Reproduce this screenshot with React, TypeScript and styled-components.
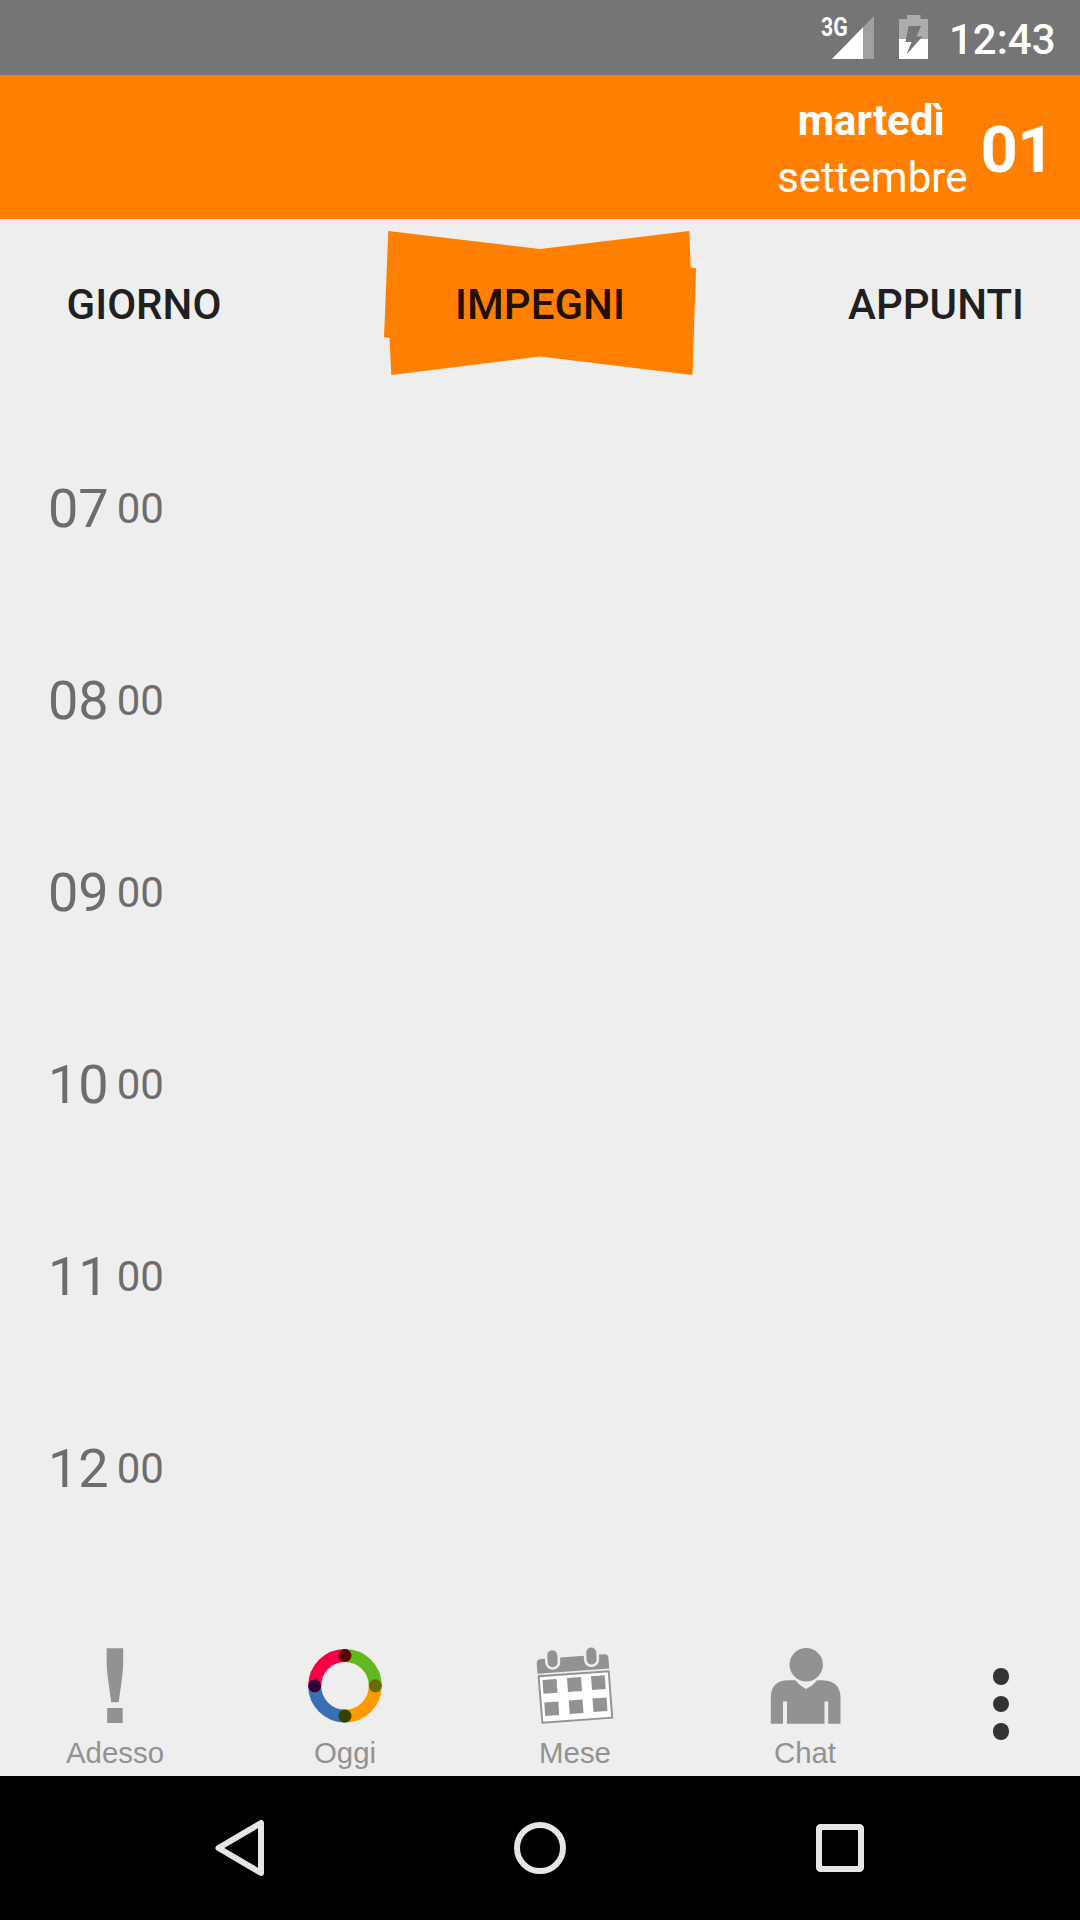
import React from "react";
import styled, { createGlobalStyle } from "styled-components";

const GlobalStyle = createGlobalStyle`
  body { margin: 0; background: #eeeeee; }
  * { box-sizing: border-box; }
`;

const Screen = styled.div`
  width: 1080px;
  height: 1920px;
  display: flex;
  flex-direction: column;
  overflow: hidden;
  background: #eeeeee;
  font-family: Roboto, sans-serif;
`;

const StatusBar = styled.div`
  height: 75px;
  flex: none;
  display: flex;
  justify-content: flex-end;
  background: #757575;
  color: #fff;
`;

const Network = styled.span`
  width: 11px;
  margin-top: 15px;
  font-size: 25px;
  line-height: 26px;
  font-weight: 700;
  transform: scaleX(0.85);
  transform-origin: 0 0;
`;

const SignalIcon = styled.svg`
  width: 42px;
  height: 43px;
  margin: 16px 25px 0 0;
`;

const BatteryIcon = styled.svg`
  width: 29px;
  height: 44px;
  margin: 15px 21px 0 0;
`;

const Clock = styled.span`
  width: 131px;
  font-size: 42px;
  line-height: 80px;
  font-weight: 500;
`;

const DateHeader = styled.header`
  height: 144px;
  flex: none;
  display: flex;
  justify-content: flex-end;
  align-items: center;
  padding: 4px 26px 0 0;
  gap: 13px;
  background: #ff8000;
  color: #fff;
`;

const DateNames = styled.div`
  display: flex;
  flex-direction: column;
  align-items: center;
`;

const DateLine = styled.span<{ $bold?: boolean }>`
  font-size: 42px;
  line-height: 57px;
  font-weight: ${(p) => (p.$bold ? 700 : 400)};
  padding-right: ${(p) => (p.$bold ? 2 : 0)}px;
`;

const DayNumber = styled.span`
  font-size: 65px;
  line-height: 72px;
  font-weight: 700;
  padding-top: 2px;
  letter-spacing: -0.5px;
`;

const Tabs = styled.nav`
  height: 168px;
  flex: none;
  display: grid;
  grid-template-columns: 288px 312px 288px;
  justify-content: space-between;
  padding: 12px 0;
`;

const Tab = styled.div`
  display: grid;
  place-items: center;
  font-size: 42px;
  line-height: 50px;
  font-weight: 500;

  > * { grid-area: 1 / 1; }
`;

const ActiveShape = styled.svg`
  width: 312px;
  height: 144px;
`;

const TabLabel = styled.span<{ $active?: boolean }>`
  z-index: 1;
  padding-top: 4px;
  letter-spacing: 0.05px;
  color: ${(p) => (p.$active ? "#220f00" : "#202020")};
`;

const Hours = styled.main`
  flex: 1;
  min-height: 0;
  padding-top: 26px;
  overflow: hidden;
`;

const HourRow = styled.div`
  height: 192px;
  display: flex;
  align-items: center;
  padding-left: 48px;
  gap: 8px;
  color: #6d6d6d;
`;

const Hour = styled.span`
  font-size: 54px;
  line-height: 64px;
`;

const Minutes = styled.span`
  font-size: 42px;
  line-height: 50px;
`;

const BottomBar = styled.footer`
  height: 144px;
  flex: none;
  display: grid;
  grid-template-columns: repeat(4, 230px) 1fr;
`;

const BottomItem = styled.div`
  display: flex;
  flex-direction: column;
  align-items: center;
  padding-top: 12px;
  color: #929292;
`;

const ItemIcon = styled.svg`
  width: 80px;
  height: 84px;
  flex: none;
`;

const ItemLabel = styled.span`
  font-family: "Liberation Sans", Arial, sans-serif;
  font-size: 29.4px;
  line-height: 34px;
  margin-top: 8px;
`;

const Overflow = styled.div`
  display: flex;
  flex-direction: column;
  align-items: center;
  gap: 11px;
  padding: 36px 0 0 2px;
`;

const Dot = styled.i`
  width: 16.7px;
  height: 16.7px;
  border-radius: 50%;
  background: #333;
`;

const SystemNav = styled.div`
  height: 144px;
  flex: none;
  display: flex;
  justify-content: center;
  align-items: center;
  gap: 240px;
  background: #000;
`;

const NavIcon = styled.svg`
  width: 60px;
  height: 60px;
  fill: none;
  stroke: #e6e6e6;
  stroke-width: 6;
  stroke-linejoin: round;
`;

const hours = ["07", "08", "09", "10", "11", "12"];

const AlertIcon = () => (
  <ItemIcon viewBox="75 1644 80 84" fill="#929292">
    <path d="M106.700 1648.300H123.200V1662Q123.200 1669 122.300 1676L118.700 1702.300H111.200L107.600 1676Q106.700 1669 106.700 1662Z" />
    <path d="M107.200 1708H122.700V1723H107.200Z" />
  </ItemIcon>
);

const RingIcon = () => (
  <ItemIcon viewBox="305 1644 80 84" fill="none" strokeWidth="13">
    <path d="M345 1655.500A30.300 30.300 0 0 1 375.300 1685.800" stroke="#62b91e" />
    <path d="M375.300 1685.800A30.300 30.300 0 0 1 345 1716.100" stroke="#ff9900" />
    <path d="M345 1716.100A30.300 30.300 0 0 1 314.700 1685.800" stroke="#396fb3" />
    <path d="M314.700 1685.800A30.300 30.300 0 0 1 345 1655.500" stroke="#f80046" />
    <g stroke="none">
      <circle cx="345" cy="1655.5" r="6.5" fill="#5c0006" />
      <circle cx="375.3" cy="1685.8" r="6.5" fill="#6a6b00" />
      <circle cx="345" cy="1716.1" r="6.5" fill="#344300" />
      <circle cx="314.7" cy="1685.8" r="6.5" fill="#35003a" />
    </g>
  </ItemIcon>
);

const CalendarIcon = () => (
  <ItemIcon viewBox="535 1644 80 84" fill="#929292">
    <path d="M537.500 1673.700L536.800 1663.500Q536.600 1659.600 540.500 1659L604 1654.300Q608 1654.200 608.400 1657.500L609.200 1668.600Z" />
    <path d="M538.600 1676.300L608.700 1671.200L612.200 1717.600L542.400 1722.800Z" fill="#fff" stroke="#929292" strokeWidth="1.9" />
    <g stroke="#eeeeee" strokeWidth="2.6">
      <rect x="546.2" y="1648.9" width="12.6" height="19.6" rx="6.3" transform="rotate(-3 552.5 1659)" />
      <rect x="585.1" y="1646.2" width="12.6" height="19.6" rx="6.3" transform="rotate(-3 591.5 1656)" />
    </g>
    <path d="M542.500 1680L556.500 1679L557.500 1692.700L543.500 1693.700ZM567 1678L581 1677L582 1691L568 1692ZM591 1676.300L604.700 1675.300L605.700 1689L592 1690ZM544.300 1702.500L558.300 1701.500L559.200 1715L545.200 1716ZM568.700 1700.500L582.500 1699.500L583.500 1713L569.700 1714ZM592.500 1698.500L606.500 1697.500L607.500 1711L593.500 1712Z" />
  </ItemIcon>
);

const PersonIcon = () => (
  <ItemIcon viewBox="765.5 1644 80 84" fill="#929292">
    <circle cx="806.7" cy="1664.7" r="16.7" />
    <path d="M771.300 1723.700V1698Q771.300 1680.300 789 1680.300H796Q799 1684.500 803 1686.800L806.700 1689L810.500 1686.800Q814.500 1684.500 817.500 1680.300H823Q841 1680.800 841 1698V1723.700H828.700V1701.500H825V1723.700H787.500V1701.500H783.500V1723.700Z" />
  </ItemIcon>
);

const items = [
  { label: "Adesso", Icon: AlertIcon },
  { label: "Oggi", Icon: RingIcon },
  { label: "Mese", Icon: CalendarIcon },
  { label: "Chat", Icon: PersonIcon },
];

export default function App() {
  return (
    <>
      <GlobalStyle />
      <Screen>
        <StatusBar>
          <Network>3G</Network>
          <SignalIcon viewBox="0 0 42 43">
            <path d="M0 43L42 0V43Z" fill="#a0a0a0" />
            <path d="M0 43L31 11.300V43Z" fill="#fff" />
          </SignalIcon>
          <BatteryIcon viewBox="0 0 29 44">
            <path d="M0 4H8V0H21.500V4H29V24H0Z" fill="#acacac" />
            <path d="M0 24H29V44H0Z" fill="#fff" />
            <path d="M9.500 11H22L17.500 21.500H23.500L7.500 39.500L12.500 27H6.500Z" fill="#757575" />
          </BatteryIcon>
          <Clock>12:43</Clock>
        </StatusBar>
        <DateHeader>
          <DateNames>
            <DateLine $bold>martedì</DateLine>
            <DateLine>settembre</DateLine>
          </DateNames>
          <DayNumber>01</DayNumber>
        </DateHeader>
        <Tabs>
          <Tab><TabLabel>GIORNO</TabLabel></Tab>
          <Tab>
            <ActiveShape viewBox="384 231 312 144">
              <path d="M388.300 231L540 249L689.300 231L690.700 267.500L696 268.300L692.500 375L540 356.500L391.300 375L389.500 338L384 337Z" fill="#ff8000" />
            </ActiveShape>
            <TabLabel $active>IMPEGNI</TabLabel>
          </Tab>
          <Tab><TabLabel>APPUNTI</TabLabel></Tab>
        </Tabs>
        <Hours>
          {hours.map((h) => (
            <HourRow key={h}>
              <Hour>{h}</Hour>
              <Minutes>00</Minutes>
            </HourRow>
          ))}
        </Hours>
        <BottomBar>
          {items.map(({ label, Icon }) => (
            <BottomItem key={label}>
              <Icon />
              <ItemLabel>{label}</ItemLabel>
            </BottomItem>
          ))}
          <Overflow><Dot /><Dot /><Dot /></Overflow>
        </BottomBar>
        <SystemNav>
          <NavIcon viewBox="210 1818 60 60">
            <path d="M218.500 1848L261 1823V1873Z" />
          </NavIcon>
          <NavIcon viewBox="0 0 60 60"><circle cx="30" cy="30" r="23" /></NavIcon>
          <NavIcon viewBox="0 0 60 60"><rect x="9" y="9" width="42" height="42" rx="1.500" /></NavIcon>
        </SystemNav>
      </Screen>
    </>
  );
}
